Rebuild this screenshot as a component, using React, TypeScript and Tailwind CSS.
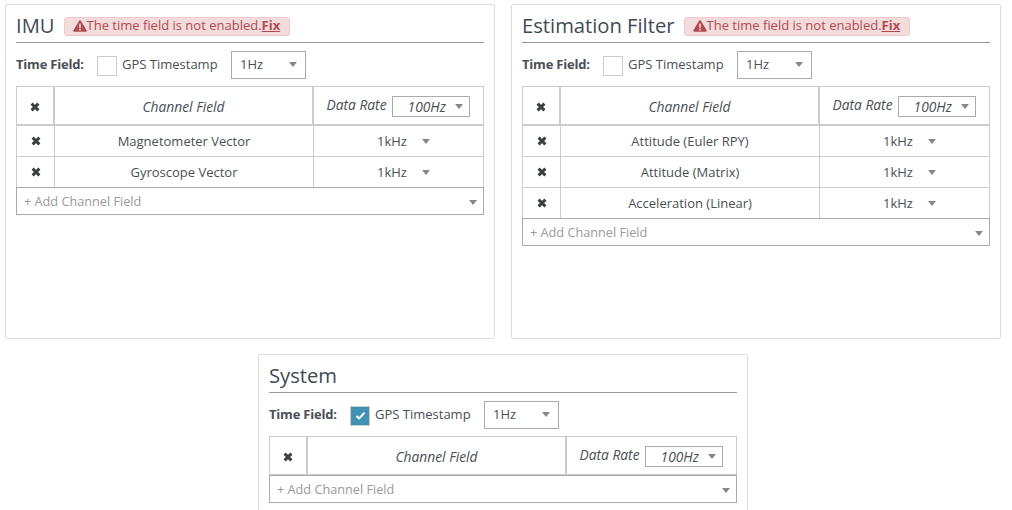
import React from "react";

const Arrow = ({ className = "" }: { className?: string }) => (
  <span className={`inline-block w-0 h-0 border-l-[4px] border-r-[4px] border-t-[5px] border-l-transparent border-r-transparent border-t-[#888888] ${className}`} />
);

const X = () => (
  <svg width="10" height="10" viewBox="0 0 10 10" className="block">
    <path d="M1.6 1.6 L8.4 8.4 M8.4 1.6 L1.6 8.4" stroke="#3a3f45" strokeWidth="2.9" strokeLinecap="butt" />
  </svg>
);

const Warn = () => (
  <svg width="14" height="12" viewBox="0 0 14 12" className="block shrink-0">
    <path d="M7 0.3 C7.5 0.3 7.8 0.6 8 1 L13.6 10.3 C14 11 13.6 11.8 12.8 11.8 L1.2 11.8 C0.4 11.8 0 11 0.4 10.3 L6 1 C6.2 0.6 6.5 0.3 7 0.3 Z" fill="#b04a4e" />
    <rect x="6.2" y="3.6" width="1.6" height="4.4" fill="#f5dcdd" />
    <rect x="6.2" y="8.8" width="1.6" height="1.6" fill="#f5dcdd" />
  </svg>
);

const Row = ({ name }: { name: string }) => (
  <div className="flex h-[31px] border-b border-[#cccccc]">
    <div className="w-[38px] border-r border-[#cccccc] flex items-center justify-center"><X /></div>
    <div className="w-[259px] border-r border-[#cccccc] pt-[2px] flex items-center justify-center text-[13px] text-[#4a4f55]">{name}</div>
    <div className="flex-1 flex items-center justify-center pl-[10px] gap-[15px] text-[13px] text-[#4a4f55]">
      <span className="pt-[2px]">1kHz</span>
      <Arrow />
    </div>
  </div>
);

const Card = ({ title, warn, checked, rows }: { title: string; warn?: boolean; checked?: boolean; rows: string[] }) => (
  <div className="w-[490px] h-[335px] shrink-0 bg-white border border-[#dddddd] rounded-[2px] px-[10px] pt-[5px]">
    <div className="h-[33px] flex items-center border-b border-[#999999] text-[20.2px] text-[#3f4a56]">
      <span className="leading-none -mt-[2px]">{title}</span>
      {warn && (
        <span className="ml-[9px] h-[19px] pl-[8px] pr-[9px] flex items-center bg-[#f4dcdd] border border-[#efc9cb] rounded-[3px] text-[13px] text-[#b04a4e]">
          <Warn />
          <span>The time field is not enabled.</span>
          <span className="font-bold underline">Fix</span>
        </span>
      )}
    </div>
    <div className="flex items-center h-[43px] text-[13px] text-[#4a4f55]">
      <span className="font-bold w-[81px] tracking-[-0.2px]">Time Field:</span>
      {checked ? (
        <span className="w-[20px] h-[20px] mt-[2px] bg-[#4292b5] border border-[#cccccc] flex items-center justify-center">
          <svg width="11" height="9" viewBox="0 0 12 10"><path d="M1.5 5.5 L4.5 8.2 L10.5 1.8" fill="none" stroke="#ffffff" strokeWidth="2.2" /></svg>
        </span>
      ) : (
        <span className="w-[20px] h-[20px] mt-[2px] bg-white border border-[#cccccc]" />
      )}
      <span className="ml-[5px] w-[109px]">GPS Timestamp</span>
      <div className="w-[75px] h-[28px] border border-[#aaaaaa] flex items-center justify-between pl-[8px] pr-[4px]">
        <span>1Hz</span>
        <Arrow className="mr-[4px]" />
      </div>
    </div>
    <div className="border border-[#cccccc] border-b-0">
      <div className="flex h-[39px] border-b-2 border-[#cccccc]">
        <div className="w-[38px] border-r-2 border-[#cccccc] pt-[2px] flex items-center justify-center"><X /></div>
        <div className="w-[259px] border-r-2 border-[#cccccc] pt-[4px] flex items-center justify-center text-[13.8px] italic text-[#4a4f55]">Channel Field</div>
        <div className="flex-1 flex items-center justify-center gap-[5px] pt-[2px] pr-[1px] text-[13.8px] italic text-[#4a4f55]">
          <span className="-mt-[3px]">Data Rate</span>
          <div className="w-[78px] h-[21px] border border-[#aaaaaa] flex items-center justify-between pl-[15px] pr-[6px]">
            <span className="pt-[2px]">100Hz</span>
            <Arrow />
          </div>
        </div>
      </div>
      {rows.map((r) => <Row key={r} name={r} />)}
    </div>
    <div className="h-[28px] -mt-px border border-[#aaaaaa] pt-[2px] flex items-center justify-between pl-[7px] pr-[6px] text-[12.7px] text-[#9a9a9a]">
      <span>+ Add Channel Field</span>
      <Arrow />
    </div>
  </div>
);

export default function App() {
  return (
    <div className="w-[1012px] h-[510px] overflow-hidden bg-white font-['Open_Sans',sans-serif]">
      <div className="w-[1006px] pt-[4px] flex flex-wrap justify-center gap-x-[16px] gap-y-[15px]">
        <Card title="IMU" warn rows={["Magnetometer Vector", "Gyroscope Vector"]} />
        <Card title="Estimation Filter" warn rows={["Attitude (Euler RPY)", "Attitude (Matrix)", "Acceleration (Linear)"]} />
        <Card title="System" checked rows={[]} />
      </div>
    </div>
  );
}
